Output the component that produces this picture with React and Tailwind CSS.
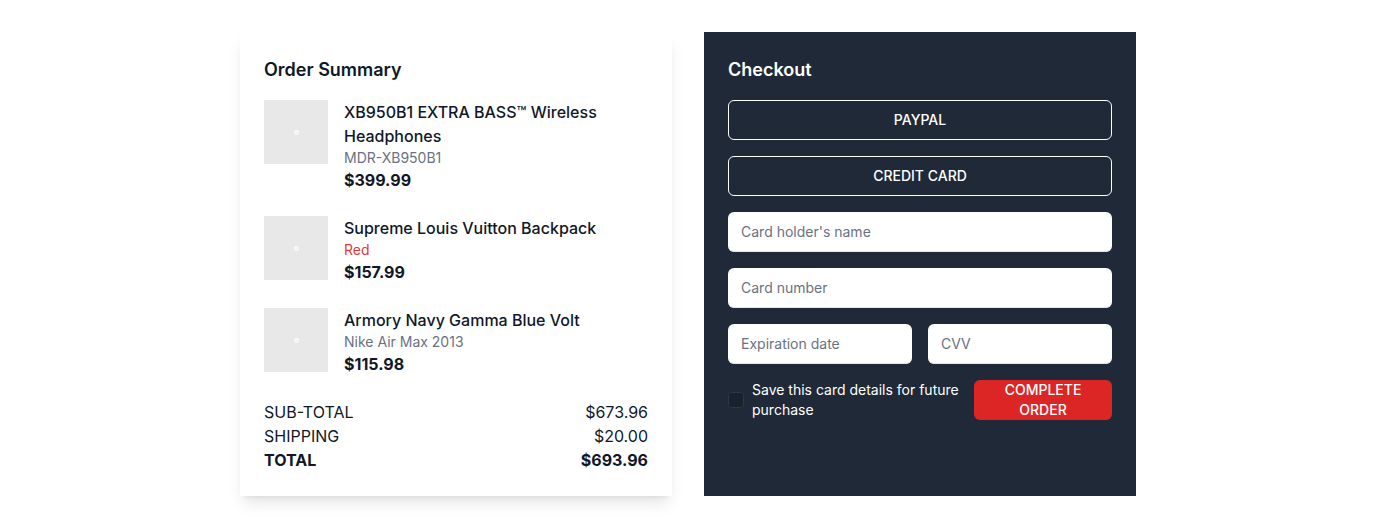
const items = [
  { name: 'XB950B1 EXTRA BASS™ Wireless Headphones', sub: 'MDR-XB950B1', subClass: 'text-gray-500', price: '$399.99' },
  { name: 'Supreme Louis Vuitton Backpack', sub: 'Red', subClass: 'text-[#e03a3a]', price: '$157.99' },
  { name: 'Armory Navy Gamma Blue Volt', sub: 'Nike Air Max 2013', subClass: 'text-gray-500', price: '$115.98' },
];

const inputClass =
  'w-full h-10 pl-[13px] pr-3 bg-white rounded-md border-b border-gray-200 text-sm text-gray-900 placeholder-gray-500 focus:outline-none';

export default function App() {
  return (
    <div className="min-h-screen bg-white font-['Inter',sans-serif] antialiased">
      <div className="max-w-4xl mx-auto py-8 grid grid-cols-2 gap-8">
        {/* Order Summary */}
        <div className="bg-white shadow-lg p-6 text-gray-900">
          <h2 className="text-lg font-semibold mb-4">Order Summary</h2>

          <div className="space-y-6">
            {items.map((item) => (
              <div key={item.sub} className="flex gap-4">
                <div className="w-16 h-16 shrink-0 bg-[#e8e8e8] flex items-center justify-center">
                  <div className="w-[5px] h-[5px] rounded-full border border-white bg-[#f2f2f2]"></div>
                </div>
                <div className="flex-1">
                  <p className="text-base font-medium leading-6 pr-10">{item.name}</p>
                  <p className={`text-sm leading-5 ${item.subClass}`}>{item.sub}</p>
                  <p className="text-base font-bold leading-6">{item.price}</p>
                </div>
              </div>
            ))}
          </div>

          <div className="mt-6 text-base leading-6">
            <div className="flex justify-between">
              <span>SUB-TOTAL</span>
              <span>$673.96</span>
            </div>
            <div className="flex justify-between">
              <span>SHIPPING</span>
              <span>$20.00</span>
            </div>
            <div className="flex justify-between font-bold">
              <span>TOTAL</span>
              <span>$693.96</span>
            </div>
          </div>
        </div>

        {/* Checkout */}
        <div className="bg-[#1f2937] p-6 text-white">
          <h2 className="text-lg font-semibold mb-4">Checkout</h2>

          <div className="space-y-4">
            <button className="w-full h-10 border border-white rounded-md text-sm font-medium uppercase">
              PayPal
            </button>
            <button className="w-full h-10 border border-white rounded-md text-sm font-medium uppercase">
              Credit Card
            </button>
            <input type="text" placeholder="Card holder's name" className={inputClass} />
            <input type="text" placeholder="Card number" className={inputClass} />
            <div className="grid grid-cols-2 gap-4">
              <input type="text" placeholder="Expiration date" className={inputClass} />
              <input type="text" placeholder="CVV" className={inputClass} />
            </div>
            <div className="flex items-center gap-2">
              <input type="checkbox" className="appearance-none w-4 h-4 shrink-0 rounded bg-[#19212c] border border-[#2c3646]" />
              <span className="flex-1 text-sm leading-5">Save this card details for future purchase</span>
              <button className="w-[138px] h-10 ml-1 px-6 bg-[#dc2626] rounded-md text-sm font-medium leading-5 uppercase">
                Complete Order
              </button>
            </div>
          </div>
        </div>
      </div>
    </div>
  );
}
